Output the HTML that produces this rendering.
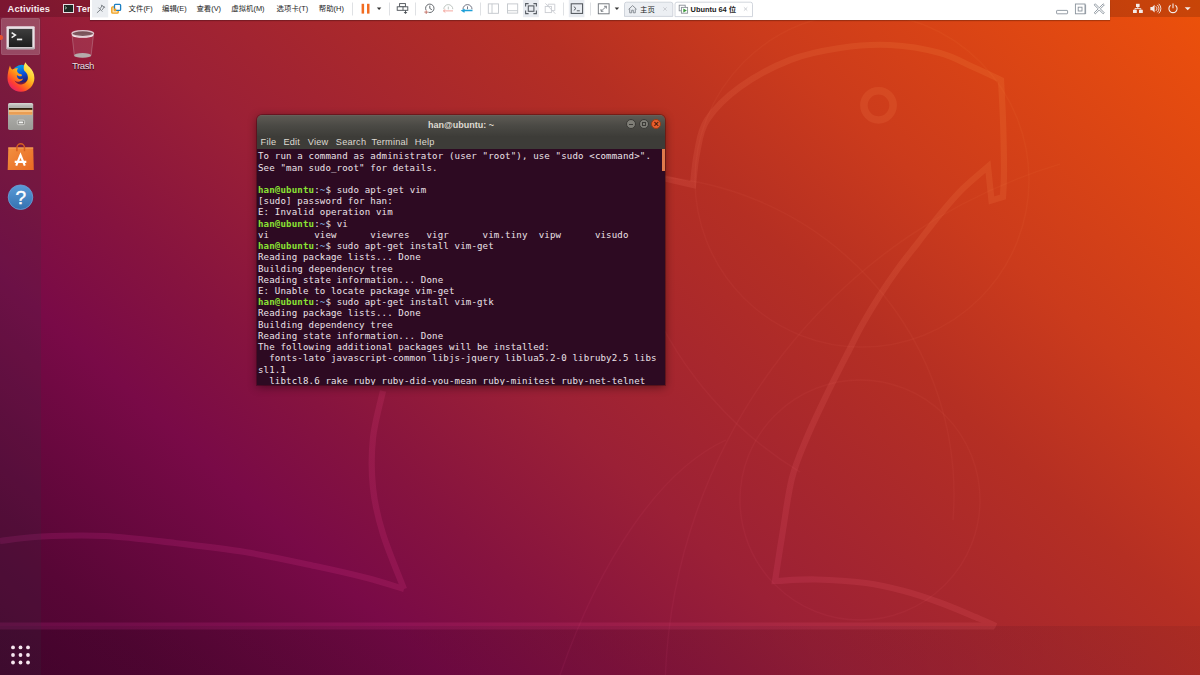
<!DOCTYPE html>
<html lang="en">
<head>
<meta charset="utf-8">
<title>Ubuntu 64 位 - VMware Workstation</title>
<style>
*{box-sizing:border-box;margin:0;padding:0}
html,body{width:1200px;height:675px;overflow:hidden;background:#991f35}
body{position:relative;font-family:"Liberation Sans","Noto Sans CJK SC",sans-serif;color:#fff}
#wall{position:absolute;left:0;top:0;width:1200px;height:675px;
background:linear-gradient(42deg,#4a0430 0%,#580636 8.5%,#790a47 22.8%,#86133f 31.6%,#9b2036 43.5%,#b52f23 64.4%,#cb3b1c 75.5%,#e84d0e 96.2%,#ec5209 100%)}
#wallsvg{position:absolute;left:0;top:0;width:1200px;height:675px}
#floor{position:absolute;left:0;top:626px;width:1200px;height:49px;background:linear-gradient(90deg,rgba(30,0,25,.2),rgba(30,0,25,.07))}
#topbar{position:absolute;left:0;top:0;width:1200px;height:17px;background:rgba(0,0,0,.33)}
#dock{position:absolute;left:0;top:17px;width:41px;height:658px;background:rgba(30,12,35,.42)}
#vm{position:absolute;left:90px;top:0;width:1020px;height:20.400px;background:#fff}
#term{position:absolute;left:257px;top:115px;width:408px;height:270.400px;border-radius:5px 5px 0 0;overflow:hidden;box-shadow:0 2px 10px rgba(0,0,0,.45),0 0 0 1px rgba(0,0,0,.25)}
#tbar{position:absolute;left:0;top:0;width:408px;height:21px;background:linear-gradient(180deg,#6a655d 0,#5c5953 6%,#4b4a45 50%,#3e3d39 100%)}
#mbar{position:absolute;left:0;top:21px;width:408px;height:13px;background:#3d3c38}
#tbody{position:absolute;left:0;top:34px;width:408px;height:237px;background:#2d0a22}

#tt{position:absolute;left:1px;top:2.4px;font-family:"DejaVu Sans Mono","Liberation Mono",monospace;font-size:9.1px;line-height:11.215px;letter-spacing:.14px;color:#ece2e8;white-space:pre}
#tt b.g{color:#8ae234}
#tt b.b{color:#729fcf}
#sb{position:absolute;right:0;top:0;width:3px;height:22px;background:#e07a4c}
#ttl{position:absolute;left:0;top:-.500px;width:408px;text-align:center;font-size:9px;font-weight:bold;line-height:20px;color:#dfdbd2}
.wb{position:absolute;top:3.800px;width:10px;height:10px;border-radius:50%;background:#7f7e77;border:.6px solid #3a3935;font-style:normal;display:block}
.wb.cl{background:#e8602f;border-color:#9c3a15;color:#4a1a08;font-size:9px;line-height:8px;text-align:center;font-weight:bold}
.wb s{position:absolute;display:block;text-decoration:none}
.wb .mn{left:2.4px;top:4px;width:4px;height:1px;background:#3c3b37}
.wb .mx{left:2.4px;top:2.4px;width:4px;height:4px;border:.8px solid #3c3b37}
#mbar span{position:absolute;top:0;font-size:9.2px;line-height:13px;letter-spacing:.22px;color:#dfdbd2}

#vm{box-shadow:0 1px 1px rgba(0,0,0,.25)}
#vmsvg{position:absolute;left:0;top:0}
.vt{position:absolute;top:-.2px;font-size:7.4px;line-height:17px;color:#1c1c1c;white-space:nowrap}

#topbar{background:rgba(0,0,0,.15)}
#act{position:absolute;left:7.600px;top:.600px;letter-spacing:.12px;font-size:9.300px;line-height:17px;font-weight:bold;color:#f6ecee}
#tico{position:absolute;left:62.500px;top:3.900px}
#tmn{position:absolute;left:76.600px;top:.600px;letter-spacing:.12px;font-size:9.300px;line-height:17px;font-weight:bold;color:#f6ecee}
#sysico{position:absolute;left:1130px;top:0}
#dock{background:rgba(50,55,65,.17)}
#hl{position:absolute;left:1.200px;top:.900px;width:38.500px;height:37.600px;border-radius:2px;background:rgba(255,255,255,.2);box-shadow:inset 0 0 0 .6px rgba(255,255,255,.12)}
#run{position:absolute;left:-2px;top:17.600px;width:5px;height:5px;border-radius:50%;background:#e8502f}
#dsvg{position:absolute;left:0;top:0}
#trash{position:absolute;left:69px;top:28px;width:28px;height:45px}
#trash svg{position:absolute;left:0;top:0}
#trash span{position:absolute;left:-6px;width:40px;top:32.200px;text-align:center;font-size:9.600px;letter-spacing:-.45px;line-height:11px;color:#f6dde3;text-shadow:0 .6px 1px rgba(0,0,0,.75),0 0 1px rgba(0,0,0,.5)}
</style>
</head>
<body>
<div id="wall"></div>
<div id="floor"></div>
<svg id="wallsvg" viewBox="0 0 1200 675">
<defs><linearGradient id="lg" gradientUnits="userSpaceOnUse" x1="163.5" y1="822.2" x2="1036.5" y2="-147.2">
<stop offset=".1" stop-color="#ff3cb4"/><stop offset=".35" stop-color="#ff4a90"/><stop offset=".6" stop-color="#ff786e"/><stop offset=".85" stop-color="#ffa050"/></linearGradient>
<linearGradient id="lg2" gradientUnits="userSpaceOnUse" x1="163.5" y1="822.2" x2="1036.5" y2="-147.2">
<stop offset=".1" stop-color="#ff3cb4" stop-opacity=".07"/><stop offset=".6" stop-color="#ff786e" stop-opacity=".06"/><stop offset=".85" stop-color="#ffa050" stop-opacity=".06"/></linearGradient></defs>
<g fill="none" stroke="url(#lg2)" stroke-width="1.300">
<circle cx="862" cy="180" r="167"/>
<path d="M640 176A319 319 0 0 1 953 520"/>
<path d="M665.4 675A557 557 0 0 1 1060 164"/>
<path d="M650 301A378 378 0 0 0 800 472"/>
<circle cx="860" cy="500" r="120"/>
<path d="M560 675C600 560 660 470 726 440"/>
</g>
<g fill="none" stroke="url(#lg)" stroke-width="6.200" stroke-linejoin="miter" opacity=".14">
<path d="M640.0 173.0C643.8 173.8 654.2 176.0 663.0 178.0C671.8 180.0 688.0 183.8 693.0 185.0C693.7 179.7 694.7 163.8 697.0 153.0C699.3 142.2 699.8 131.0 707.0 120.0C714.2 109.0 726.2 97.0 740.0 87.0C753.8 77.0 773.3 66.5 790.0 60.0C806.7 53.5 823.3 50.5 840.0 48.0C856.7 45.5 873.3 44.2 890.0 45.0C906.7 45.8 926.2 49.3 940.0 53.0C953.8 56.7 962.8 62.5 973.0 67.0C983.2 71.5 996.3 77.8 1001.0 80.0C1001.3 86.7 1002.5 105.0 1003.0 120.0C1003.5 135.0 1004.0 157.2 1004.0 170.0C1004.0 182.8 1003.2 192.5 1003.0 197.0L991.5 200.5L988.0 166.5C983.8 170.2 970.7 180.9 963.0 188.5C955.3 196.1 949.4 203.1 942.0 212.0C934.6 220.9 925.8 232.6 918.5 242.0C911.2 251.4 904.4 259.7 898.0 268.5C891.6 277.3 886.0 285.6 880.0 295.0C874.0 304.4 867.0 316.1 862.0 325.0C857.0 333.9 855.9 336.9 850.0 348.5C844.1 360.1 834.0 379.7 826.7 394.7C819.5 409.7 812.3 424.6 806.5 438.5C800.7 452.4 795.9 462.8 792.0 478.0C788.1 493.2 785.8 512.8 783.0 530.0C780.2 547.2 776.3 572.5 775.0 581.0C781.8 580.8 800.8 579.2 816.0 579.5C831.2 579.8 851.3 581.1 866.0 583.0C880.7 584.9 891.5 587.7 904.0 591.0C916.5 594.3 928.5 598.4 941.0 603.0C953.5 607.6 969.8 614.7 979.0 618.5C988.2 622.3 993.2 624.8 996.0 626.0"/>
<path d="M383.0 391.0C381.3 398.8 374.7 421.8 373.0 438.0C371.3 454.2 371.3 472.0 373.0 488.0C374.7 504.0 377.8 517.2 383.0 534.0C388.2 550.8 400.5 579.8 404.0 589.0"/>
<path d="M0.0 541.0C7.0 540.2 24.5 537.3 42.0 536.5C59.5 535.7 82.8 534.9 105.0 536.0C127.2 537.1 151.7 540.3 175.0 543.0C198.3 545.7 221.7 548.2 245.0 552.0C268.3 555.8 294.7 561.7 315.0 566.0C335.3 570.3 352.2 574.2 367.0 578.0C381.8 581.8 397.8 587.2 404.0 589.0"/>
<path d="M0 626h994" stroke-width="7"/>
<circle cx="878.500" cy="105.300" r="14.600" stroke-width="7.500"/>
</g>
</svg>
<div id="topbar">
<span id="act">Activities</span>
<svg id="tico" width="12" height="10" viewBox="0 0 12 10"><rect x=".5" y=".5" width="10" height="8" fill="#1e2a24" stroke="#e8dfe2" stroke-width="1"/><path d="M2 2.600l1.600 1.300-1.600 1.300" stroke="#cfe6d6" stroke-width=".8" fill="none"/></svg>
<span id="tmn">Terminal</span>
<svg id="sysico" width="70" height="17" viewBox="1130 0 70 17" fill="#f4ece9">
<rect x="1136" y="3.800" width="3.600" height="3.200"/><rect x="1133" y="9.800" width="3.800" height="3.200"/><rect x="1139" y="9.800" width="3.800" height="3.200"/>
<path d="M1137.800 7v1.600M1134.900 9.800v-1.200h6v1.200" stroke="#f4ece9" stroke-width=".9" fill="none"/>
<path d="M1150.400 7h1.800l2.400-2.300v7.800l-2.400-2.300h-1.800z"/>
<path d="M1155.800 6.300a3 3 0 0 1 0 4.600M1157.300 4.900a5 5 0 0 1 0 7.400M1158.800 3.800a6.600 6.600 0 0 1 0 9.600" stroke="#f4ece9" stroke-width=".9" fill="none"/>
<path d="M1170.600 5.200a4.100 4.100 0 1 0 4.800 0" stroke="#f4ece9" stroke-width="1.100" fill="none"/>
<path d="M1173 3.600v4.600" stroke="#f4ece9" stroke-width="1.100"/>
<path d="M1184.700 7.200h6l-3 3z"/>
</svg>
</div>
<div id="dock">
<div id="hl"></div>
<div id="run"></div>
<svg id="dsvg" width="42" height="658" viewBox="0 17 42 658">
<defs>
<linearGradient id="tg" x1="0" y1="0" x2="0" y2="1"><stop offset="0" stop-color="#3e3e3e"/><stop offset="1" stop-color="#1c1c1c"/></linearGradient>
<linearGradient id="fxg" x1=".85" y1=".1" x2=".2" y2=".95"><stop offset="0" stop-color="#fff36a"/><stop offset=".3" stop-color="#ffcb2a"/><stop offset=".55" stop-color="#ff8a16"/><stop offset=".8" stop-color="#ff4030"/><stop offset="1" stop-color="#e8206a"/></linearGradient>
<linearGradient id="fxb" x1=".3" y1="0" x2=".6" y2="1"><stop offset="0" stop-color="#00a8f0"/><stop offset=".55" stop-color="#0a4fd8"/><stop offset="1" stop-color="#2a1763"/></linearGradient>
<linearGradient id="flg" x1="0" y1="0" x2="0" y2="1"><stop offset="0" stop-color="#d9d9d6"/><stop offset=".12" stop-color="#b6b6b2"/><stop offset="1" stop-color="#9a9a96"/></linearGradient>
<linearGradient id="swg" x1="0" y1="0" x2="1" y2="1"><stop offset="0" stop-color="#f29040"/><stop offset="1" stop-color="#e86a22"/></linearGradient>
<linearGradient id="hpg" x1="0" y1="0" x2="0" y2="1"><stop offset="0" stop-color="#5a9bd8"/><stop offset="1" stop-color="#3572b0"/></linearGradient>
</defs>
<!-- terminal -->
<rect x="6.500" y="26.200" width="28.200" height="23.100" rx="1" fill="#e9e1e5"/>
<rect x="6.500" y="47.600" width="28.200" height="1.700" rx=".8" fill="#b5adb1"/>
<rect x="8.900" y="28.900" width="23.400" height="18.100" fill="url(#tg)"/>
<path d="M11.600 32.600l3.800 2.500-3.800 2.500" fill="none" stroke="#f2f2f2" stroke-width="1.500"/>
<rect x="16.900" y="38.600" width="5.300" height="1.700" fill="#f2f2f2"/>
<!-- firefox -->
<circle cx="21.800" cy="73.600" r="8.900" fill="url(#fxb)"/>
<path d="M10 65.500c.3 1.800 1 3.200 2.300 4 1.800-1 3.800-1.400 5.700-1.100-.9.900-1.200 2.200-.7 3.300.6 1.300 1.600 2 3 2.200 1.200.2 1.800.8 1.600 1.500-.3.900-1.400 1.100-2.600.9-.9-.2-1.700-.6-2.400-1.200-.2 1.500.4 2.800 1.600 3.600 1.500 1 3.200.8 4.600-.1-.5 1.500-1.800 2.600-3.400 3-2 .5-3.900-.1-5.300-1.400 1.100 2.600 3.700 4.200 6.600 4.200 4 0 6.900-3 6.900-6.800 0-2.400-1-4.400-2.500-5.900-1.200-1.200-1.900-2.500-1.700-4.300.1-1.800.8-3.400 1.800-5.100 1 2.300 2.600 3.500 4.200 5 2.800 2.700 4.700 6.300 4.700 10.800 0 7.600-6 13.700-13.500 13.700-7.500 0-13.400-6-13.400-13.600 0-4.800 1.100-9 2.500-12.700z" fill="url(#fxg)"/>
<!-- files -->
<rect x="8" y="102.900" width="25.200" height="27" rx="1.600" fill="url(#flg)"/>
<rect x="8.900" y="108" width="23.400" height="2" fill="#2e2010"/>
<rect x="8.900" y="109.800" width="23.400" height="5" fill="#f0a860"/>
<rect x="8.900" y="110.600" width="23.400" height=".9" fill="#fbd9a8"/>
<rect x="8.900" y="112.600" width="23.400" height=".8" fill="#e08f45"/>
<rect x="17.300" y="120.100" width="7.300" height="4.600" rx="1.400" fill="#8c8c88" stroke="#d6d6d2" stroke-width=".9"/>
<rect x="18.800" y="121.500" width="4.300" height="1.800" rx=".6" fill="#f4f4f2"/>
<!-- software -->
<path d="M8.300 147.400h24.900l.6 22.500h-26.100z" fill="url(#swg)"/>
<path d="M8.300 147.400h24.900v1h-24.900z" fill="#f6a45e"/>
<path d="M16.900 151.200v-3.600a3.800 3.800 0 0 1 7.600 0v3.600" fill="none" stroke="#d65f20" stroke-width="1.500"/>
<path d="M16.200 165.600l4.300-10.600 4.300 10.600M14.700 161.900h11.600" fill="none" stroke="#fff" stroke-width="2.100"/>
<!-- help -->
<circle cx="20.500" cy="197.200" r="12.300" fill="url(#hpg)" stroke="#6fa8de" stroke-width=".7"/>
<text x="20.700" y="204.300" text-anchor="middle" font-family="Liberation Sans,sans-serif" font-size="19" fill="#fff" stroke="#fff" stroke-width=".45">?</text>
<!-- apps grid -->
<g fill="#f6e6ef">
<circle cx="13" cy="647.400" r="1.900"/><circle cx="20.500" cy="647.400" r="1.900"/><circle cx="28" cy="647.400" r="1.900"/>
<circle cx="13" cy="655" r="1.900"/><circle cx="20.500" cy="655" r="1.900"/><circle cx="28" cy="655" r="1.900"/>
<circle cx="13" cy="662.500" r="1.900"/><circle cx="20.500" cy="662.500" r="1.900"/><circle cx="28" cy="662.500" r="1.900"/>
</g>
</svg>
</div>
<div id="trash">
<svg width="28" height="32" viewBox="69 28 28 32">
<path d="M71.600 33.600l2.500 22c.5 1.600 4.300 2.600 8.600 2.600s8.100-1 8.600-2.600l2.600-22z" fill="rgba(255,215,225,.1)"/>
<ellipse cx="82.600" cy="55.400" rx="8.500" ry="2.400" fill="#b9c2bc" fill-opacity=".85"/>
<ellipse cx="82.750" cy="33.600" rx="10.900" ry="2.900" fill="#65756e" fill-opacity=".6" stroke="#dcc3cb" stroke-width="1.200"/>
<path d="M72.400 35.200a10.900 2.900 0 0 0 20.700 0" fill="none" stroke="#f4e8eb" stroke-width="1.300"/>
<path d="M72 34.500l2.300 21M93.500 34.500l-2.400 21" stroke="#d8c6cb" stroke-opacity=".4" stroke-width=".7" fill="none"/>
</svg>
<span>Trash</span>
</div>
<div id="vm">
<svg id="vmsvg" width="1020" height="21" viewBox="90 0 1020 21">
<rect x="92" y="0" width="16.200" height="17.400" fill="#ebeef2"/>
<g fill="none" stroke="#6d7279" stroke-width=".85" stroke-linecap="round" stroke-linejoin="round">
<path d="M101.300 5.200l3.500 2.200M102 5.700l-1.600 2.700M104.100 7l-1.700 2.600M98.700 7.900l3.400 3.400M100.300 9.800l-3.100 2.800"/>
</g>
<rect x="111.800" y="6.900" width="6.400" height="6.200" rx=".9" fill="#fbe6c0" stroke="#f0a01e" stroke-width="1.400"/>
<rect x="114.500" y="4.400" width="6.100" height="6" rx=".9" fill="#fff" stroke="#1b7fc2" stroke-width="1.300"/>
<rect x="113.8" y="8.6" width="2.4" height="2.6" fill="#f2a01e"/>
<g stroke="#dfe1e4" stroke-width="1">
<path d="M352.5 2.5v13M389.5 2.5v13M415.5 2.5v13M480.5 2.5v13M563.5 2.5v13M590.5 2.5v13"/>
</g>
<rect x="361.6" y="3.8" width="2.5" height="9.8" fill="#f26c21"/>
<rect x="367" y="3.8" width="2.5" height="9.8" fill="#f26c21"/>
<path d="M376.9 7.5h4.4l-2.2 2.4z" fill="#333"/>
<g fill="none" stroke="#4a4f55" stroke-width=".9">
<rect x="399.6" y="3.6" width="5.8" height="3.2"/>
<rect x="397.2" y="6.8" width="10.6" height="3.5" fill="#fff"/>
<path d="M403 6.800v3.500M405.500 10.300v2"/>
</g>
<path d="M403.600 12h3.800l-1.900 1.900z" fill="#4a4f55"/>
<g fill="none" stroke="#4a4f55" stroke-width=".85">
<circle cx="429.800" cy="8.300" r="4.200"/>
<path d="M429.800 5.600v2.900l2.100 1.200"/>
</g>
<rect x="424" y="10" width="4.400" height="4.400" fill="#fff"/>
<path d="M426.200 10.200v3.800M424.300 12.100h3.800" stroke="#b5564a" stroke-width=".75" fill="none"/>
<g fill="none" stroke="#b4bcb6" stroke-width=".85">
<path d="M443.800 9.200a4.500 4.600 0 0 1 9 0"/>
<path d="M448.300 6.600v2.800"/>
</g>
<path d="M443.400 10.900h9.600M445.300 9.400l-1.900 1.500 1.900 1.500" stroke="#f4a9a0" stroke-width="1" fill="none"/>
<g fill="none" stroke="#5a5f70" stroke-width=".85">
<path d="M463 9.200a4.500 4.600 0 0 1 9 0"/>
<path d="M467.500 6.400v2.800"/>
</g>
<path d="M463.500 10.500h9M464.600 9.200l-2.600 1.400 2.600 1.700" stroke="#1fa0d8" stroke-width="1.300" fill="none"/>
<g fill="none" stroke="#c2c6cb" stroke-width=".9">
<rect x="488.3" y="3.9" width="10.2" height="9.4"/><path d="M492 3.9v9.4"/>
<rect x="507.5" y="3.9" width="10.2" height="9.2"/><path d="M507.5 10.7h10.2"/>
</g>
<rect x="523" y="0" width="15.800" height="17.200" fill="#e9ecf1"/>
<g fill="none" stroke="#5a5f66" stroke-width="1.1">
<path d="M525.6 6.6v-3h3M533.4 3.6h3v3M536.4 10.6v3h-3M528.6 13.6h-3v-3"/>
<rect x="528.3" y="5.9" width="5.6" height="5.4"/>
</g>
<g fill="none" stroke="#c9ccd1" stroke-width=".9">
<rect x="545.2" y="6.4" width="6.2" height="6.2"/><path d="M548.2 6.4v-2.2h6.6v6.4h-3.4M545.4 3.4l10 10.4"/>
</g>
<rect x="568.800" y="0" width="15.600" height="17.200" fill="#e9ecf1"/>
<g fill="none" stroke="#4a4f55" stroke-width="1">
<rect x="571.2" y="3.8" width="11.4" height="9.6"/>
<path d="M573.8 6.6l2.2 1.9-2.2 1.9M576.8 10.8h3" stroke-width=".9"/>
</g>
<g fill="none" stroke="#6a6f75" stroke-width=".9">
<rect x="598.3" y="3.8" width="10.8" height="10"/>
<path d="M601 11.3l5.4-5M601 9v2.3h2.4M604 6.3h2.4v2.3" stroke-width=".8"/>
</g>
<path d="M614.7 7.5h4.4l-2.2 2.4z" fill="#333"/>
<path d="M624.5 16.4v-12.2a2 2 0 0 1 2-2h44.300a2 2 0 0 1 2 2v12.200z" fill="#eceff3" stroke="#c7ccd4" stroke-width=".8"/>
<path d="M675 16.600v-12.400a2 2 0 0 1 2-2h73.500a2 2 0 0 1 2 2v12.400z" fill="#fff" stroke="#c7ccd4" stroke-width=".8"/>
<path d="M628.600 9.300l4-3.700 4 3.700M629.700 8.600v4.200h2v-2.600h1.600v2.600h2v-4.200" fill="none" stroke="#7a7f86" stroke-width=".85"/>
<path d="M663.300 7.300l3.400 3.400M666.700 7.300l-3.400 3.400" stroke="#c8cbd0" stroke-width=".9" fill="none"/>
<path d="M743.900 7.300l3.400 3.400M747.300 7.300l-3.400 3.400" stroke="#c8cbd0" stroke-width=".9" fill="none"/>
<g fill="none" stroke="#8a9097" stroke-width=".9">
<rect x="679.200" y="5.200" width="6" height="5.600"/>
<rect x="681.400" y="7.400" width="6.200" height="5.800" fill="#fff"/>
</g>
<path d="M683.300 8.400v4l3.600-2z" fill="#3a9a3a"/>
<g fill="none" stroke="#8a939c" stroke-width=".9">
<rect x="1056.600" y="10.400" width="11" height="3.400" rx=".6"/>
<rect x="1075.400" y="4" width="9.600" height="9.800"/>
<rect x="1078.200" y="7.200" width="3.800" height="3.800"/>
<path d="M1085.600 4.600v9.400"/>
<path d="M1094.200 4.900l1.100-1.100 3.950 3.950 3.950-3.950 1.100 1.100-3.950 3.950 3.950 3.950-1.100 1.100-3.950-3.950-3.950 3.950-1.100-1.100 3.950-3.950z"/>
</g>
</svg>
<span class="vt" style="left:38.600px">文件(F)</span>
<span class="vt" style="left:72px">编辑(E)</span>
<span class="vt" style="left:106.400px">查看(V)</span>
<span class="vt" style="left:141.300px">虚拟机(M)</span>
<span class="vt" style="left:186.600px">选项卡(T)</span>
<span class="vt" style="left:228.800px">帮助(H)</span>
<span class="vt" style="left:550px;top:1.200px">主页</span>
<span class="vt" style="left:600.600px;top:1.200px;font-weight:bold">Ubuntu 64 位</span>
</div>
<div id="term">
 <div id="tbar"><div id="ttl">han@ubuntu: ~</div><i class="wb" style="left:369.100px"><s class="mn"></s></i><i class="wb" style="left:381.600px"><s class="mx"></s></i><i class="wb cl" style="left:394.100px">×</i></div>
 <div id="mbar"><span style="left:3.600px">File</span><span style="left:26.400px">Edit</span><span style="left:50.800px">View</span><span style="left:78.800px">Search</span><span style="left:114.600px">Terminal</span><span style="left:157.800px">Help</span></div>
 <div id="tbody"><pre id="tt">To run a command as administrator (user "root"), use "sudo &lt;command&gt;".
See "man sudo_root" for details.

<b class="g">han@ubuntu</b>:<b class="b">~</b>$ sudo apt-get vim
[sudo] password for han: 
E: Invalid operation vim
<b class="g">han@ubuntu</b>:<b class="b">~</b>$ vi
vi        view      viewres   vigr      vim.tiny  vipw      visudo
<b class="g">han@ubuntu</b>:<b class="b">~</b>$ sudo apt-get install vim-get
Reading package lists... Done
Building dependency tree       
Reading state information... Done
E: Unable to locate package vim-get
<b class="g">han@ubuntu</b>:<b class="b">~</b>$ sudo apt-get install vim-gtk
Reading package lists... Done
Building dependency tree       
Reading state information... Done
The following additional packages will be installed:
  fonts-lato javascript-common libjs-jquery liblua5.2-0 libruby2.5 libs
sl1.1
  libtcl8.6 rake ruby ruby-did-you-mean ruby-minitest ruby-net-telnet</pre><div id="sb"></div></div>
</div>
</body>
</html>
